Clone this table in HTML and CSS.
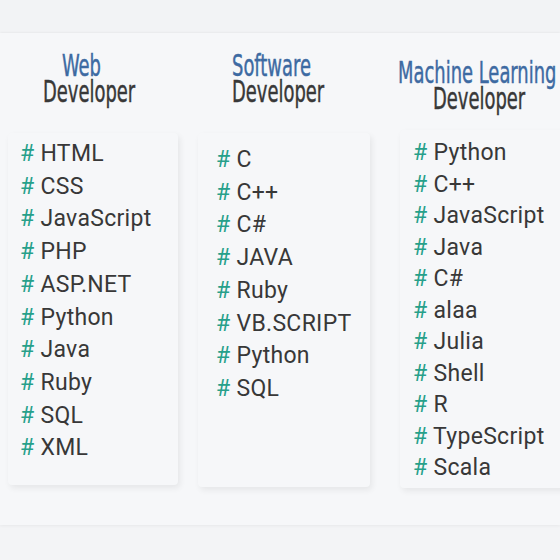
FILE: index.html
```html
<!DOCTYPE html>
<html>
<head>
<meta charset="utf-8">
<link rel="stylesheet" href="styles.css">
</head>
<body>
<div class="top"></div>
<div class="panel">
  <div class="col col1">
    <div class="head">
      <span class="blue">Web</span>
      <span class="dark">Developer</span>
    </div>
    <ul class="card">
      <li><b>#</b> HTML</li>
      <li><b>#</b> CSS</li>
      <li><b>#</b> JavaScript</li>
      <li><b>#</b> PHP</li>
      <li><b>#</b> ASP.NET</li>
      <li><b>#</b> Python</li>
      <li><b>#</b> Java</li>
      <li><b>#</b> Ruby</li>
      <li><b>#</b> SQL</li>
      <li><b>#</b> XML</li>
    </ul>
  </div>
  <div class="col col2">
    <div class="head">
      <span class="blue">Software</span>
      <span class="dark">Developer</span>
    </div>
    <ul class="card">
      <li><b>#</b> C</li>
      <li><b>#</b> C++</li>
      <li><b>#</b> C#</li>
      <li><b>#</b> JAVA</li>
      <li><b>#</b> Ruby</li>
      <li><b>#</b> VB.SCRIPT</li>
      <li><b>#</b> Python</li>
      <li><b>#</b> SQL</li>
    </ul>
  </div>
  <div class="col col3">
    <div class="head">
      <span class="blue ml">Machine Learning</span>
      <span class="dark">Developer</span>
    </div>
    <ul class="card">
      <li><b>#</b> Python</li>
      <li><b>#</b> C++</li>
      <li><b>#</b> JavaScript</li>
      <li><b>#</b> Java</li>
      <li><b>#</b> C#</li>
      <li><b>#</b> alaa</li>
      <li><b>#</b> Julia</li>
      <li><b>#</b> Shell</li>
      <li><b>#</b> R</li>
      <li><b>#</b> TypeScript</li>
      <li><b>#</b> Scala</li>
    </ul>
  </div>
</div>
</body>
</html>
```
FILE: styles.css
```css
html, body {
  margin: 0;
  padding: 0;
  width: 560px;
  height: 560px;
  overflow: hidden;
  background: #f3f4f6;
}
.top {
  height: 33px;
  background: #f2f3f5;
}
.panel {
  display: flex;
  height: 492px;
  background: #f6f7f9;
  box-shadow: 0 -1px 2px rgba(0,0,0,0.03), 0 1px 3px rgba(0,0,0,0.05);
  box-sizing: border-box;
  overflow: hidden;
}
.col {
  display: flex;
  flex-direction: column;
  flex: none;
}
.col1 { width: 170px; margin-left: 8px; }
.col2 { width: 172px; margin-left: 20px; }
.col3 { width: 175px; margin-left: 30px; }
.head {
  display: flex;
  flex-direction: column;
  align-items: flex-start;
  font-family: "DejaVu Sans Condensed", "DejaVu Sans", sans-serif;
  font-size: 24px;
  line-height: 26px;
  white-space: nowrap;
  box-sizing: border-box;
}
.head span {
  display: block;
  transform: scale(0.83, 1.25);
  transform-origin: left center;
  -webkit-text-stroke: 0.35px currentColor;
}
.blue { color: #3d6aa2; }
.dark { color: #383838; }
.col1 .head, .col2 .head { height: 100px; padding-top: 20px; }
.col1 .blue { margin-left: 54px; }
.col1 .dark { margin-left: 35px; }
.col2 .blue { margin-left: 34px; }
.col2 .dark { margin-left: 34px; }
.col3 .head { height: 97px; padding-top: 27px; }
.col3 .blue { margin-left: -2px; }
.col3 .dark { margin-left: 33px; }
.card {
  list-style: none;
  margin: 0;
  background: #f6f7f9;
  border-radius: 4px;
  box-shadow: 2px 3px 6px rgba(0,0,0,0.07);
  font-family: Roboto, "Liberation Sans", sans-serif;
  font-size: 23px;
  letter-spacing: 0.3px;
  color: #383838;
  box-sizing: border-box;
}
.card li { white-space: nowrap; }
.card b { font-weight: normal; color: #27a08a; }
.col1 .card { height: 352px; padding: 5px 0 0 12px; line-height: 32.7px; }
.col2 .card { height: 354px; padding: 11px 0 0 18px; line-height: 32.7px; }
.col3 .card { height: 358px; padding: 7px 0 0 13px; line-height: 31.5px; width: 200px; }
```
